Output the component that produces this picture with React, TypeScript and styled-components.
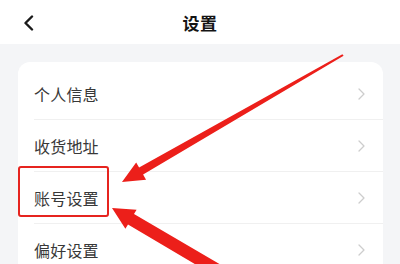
import React from 'react';
import styled, { createGlobalStyle } from 'styled-components';

const GlobalStyle = createGlobalStyle`
  html, body {
    margin: 0;
    padding: 0;
    background: #f4f5f7;
    font-family: "Noto Sans CJK SC", "Noto Sans", sans-serif;
  }
`;

const Page = styled.div`
  position: relative;
  width: 400px;
  height: 264px;
  overflow: hidden;
  background: #f4f5f7;
`;

const Header = styled.header`
  height: 44px;
  display: flex;
  align-items: center;
  justify-content: center;
  position: relative;
  background: #fff;
`;

const BackButton = styled.button`
  position: absolute;
  left: 20px;
  top: 14px;
  width: 18px;
  height: 18px;
  padding: 0;
  border: none;
  background: none;
  display: flex;
  align-items: center;
  justify-content: center;
`;

const Title = styled.h1`
  margin: 0;
  font-size: 17px;
  font-weight: 700;
  color: #141414;
  letter-spacing: 0.5px;
`;

const Content = styled.main`
  padding: 18px 17px 0 18px;
`;

const Card = styled.section`
  background: #fff;
  border-radius: 12px;
  padding: 6px 0 0 16px;
`;

const Row = styled.div<{ $last?: boolean }>`
  height: 52px;
  display: flex;
  align-items: center;
  justify-content: space-between;
  padding-right: 18px;
  border-bottom: ${(p) => (p.$last ? 'none' : '1px solid #f0f0f0')};
  box-sizing: border-box;
`;

const Label = styled.span`
  font-size: 16px;
  color: #383838;
  letter-spacing: 0.2px;
`;

const Highlight = styled.div`
  position: absolute;
  left: 18px;
  top: 166px;
  width: 91px;
  height: 51px;
  border: 2px solid #e6241f;
  border-radius: 3px;
  box-sizing: border-box;
`;

const Annotation = styled.svg`
  position: absolute;
  left: 0;
  top: 0;
  pointer-events: none;
`;

const Chevron = () => (
  <svg width="7" height="12" viewBox="0 0 7 12">
    <path d="M1 1l5 5-5 5" fill="none" stroke="#cdcdcd" strokeWidth="1.3" strokeLinecap="round" strokeLinejoin="round" />
  </svg>
);

const items = ['个人信息', '收货地址', '账号设置', '偏好设置'];

export default function App() {
  return (
    <Page>
      <GlobalStyle />
      <Header>
        <BackButton aria-label="返回">
          <svg width="12" height="16" viewBox="0 0 12 16">
            <path d="M9 1.5L2.5 8 9 14.5" fill="none" stroke="#1a1a1a" strokeWidth="2.4" strokeLinecap="round" strokeLinejoin="round" />
          </svg>
        </BackButton>
        <Title>设置</Title>
      </Header>
      <Content>
        <Card>
          {items.map((t, i) => (
            <Row key={t} $last={i === items.length - 1}>
              <Label>{t}</Label>
              <Chevron />
            </Row>
          ))}
        </Card>
      </Content>
      <Highlight />
      <Annotation width="400" height="264" viewBox="0 0 400 264">
        <polygon
          fill="#ec1f1a"
          points="342.4,54.2 139.1,167.6 136.15,162.4 122,182 146.05,179.8 143.1,174.6 343.6,55.8"
        />
        <polygon
          fill="#ec1f1a"
          points="136.6,209.7 134,214 279.1,298.9 272.5,310.1 128,224.4 125.4,228.7 112,208"
        />
      </Annotation>
    </Page>
  );
}
